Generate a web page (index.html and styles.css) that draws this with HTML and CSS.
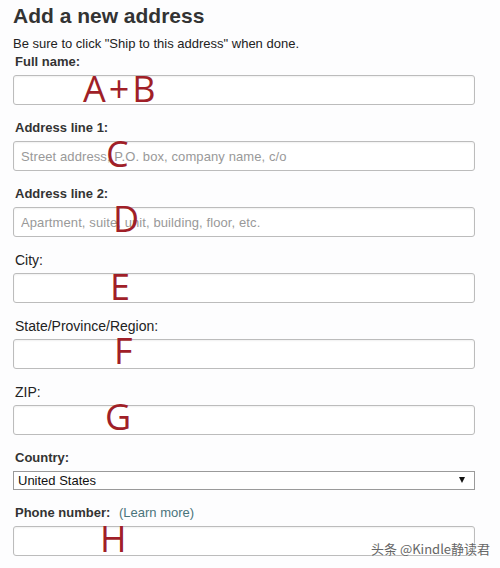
FILE: index.html
```html
<!DOCTYPE html>
<html lang="en">
<head>
    <meta charset="UTF-8">
    <meta name="viewport" content="width=device-width, initial-scale=1.0">
    <title>Add a new address</title>
    <link rel="stylesheet" href="styles.css">
</head>
<body>
    <div class="page">
        <h1 class="title">Add a new address</h1>
        <p class="hint">Be sure to click "Ship to this address" when done.</p>

        <form class="address-form">
            <div class="field first">
                <label for="fullName">Full name:</label>
                <div class="box">
                    <input type="text" id="fullName">
                    <span class="mark mark-ab">A+B</span>
                </div>
            </div>
            <div class="field">
                <label for="line1">Address line 1:</label>
                <div class="box">
                    <input type="text" id="line1" placeholder="Street address, P.O. box, company name, c/o">
                    <span class="mark mark-c">C</span>
                </div>
            </div>
            <div class="field">
                <label for="line2">Address line 2:</label>
                <div class="box">
                    <input type="text" id="line2" placeholder="Apartment, suite, unit, building, floor, etc.">
                    <span class="mark mark-d">D</span>
                </div>
            </div>
            <div class="field">
                <label class="plain" for="city">City:</label>
                <div class="box">
                    <input type="text" id="city">
                    <span class="mark mark-e">E</span>
                </div>
            </div>
            <div class="field">
                <label class="plain" for="state">State/Province/Region:</label>
                <div class="box">
                    <input type="text" id="state">
                    <span class="mark mark-f">F</span>
                </div>
            </div>
            <div class="field">
                <label class="plain" for="zip">ZIP:</label>
                <div class="box">
                    <input type="text" id="zip">
                    <span class="mark mark-g">G</span>
                </div>
            </div>
            <div class="field">
                <label for="country">Country:</label>
                <div class="select-wrap">
                    <select id="country">
                        <option>United States</option>
                        <option>Canada</option>
                        <option>United Kingdom</option>
                    </select>
                </div>
            </div>
            <div class="field">
                <label for="phone">Phone number: <a class="learn-more" href="#">(Learn more)</a></label>
                <div class="box">
                    <input type="text" id="phone">
                    <span class="mark mark-h">H</span>
                </div>
            </div>
        </form>
    </div>

    <div class="watermark">头条 @Kindle静读君</div>
</body>
</html>
```

FILE: styles.css
```css
body {
    margin: 0;
    background-color: #fdfdfe;
    font-family: "Liberation Sans", Arial, sans-serif;
    color: #333;
}

.page {
    width: 462px;
    padding: 0 13px;
}

.title {
    margin: 4px 0 0;
    font-size: 21px;
    line-height: 24px;
    font-weight: bold;
    color: #333;
}

.hint {
    margin: 8px 0 0;
    font-size: 13px;
    line-height: 15px;
    color: #222;
}

.address-form {
    margin-top: 3px;
}

.field {
    margin-bottom: 15px;
}

.field label {
    display: block;
    padding-left: 2px;
    margin-bottom: 5px;
    font-size: 13px;
    line-height: 16px;
    font-weight: bold;
    color: #333;
}

.field label.plain {
    font-size: 14px;
    font-weight: normal;
    color: #222;
}

.learn-more {
    margin-left: 5px;
    font-weight: normal;
    color: #4a747b;
    text-decoration: none;
}

.box {
    position: relative;
}

.box input {
    display: block;
    box-sizing: border-box;
    width: 100%;
    height: 30px;
    padding: 0 7px;
    border: 1px solid #bcbcbc;
    border-radius: 3px;
    background-color: #fff;
    box-shadow: inset 0 1px 2px rgba(0, 0, 0, 0.06);
    font-family: "Liberation Sans", Arial, sans-serif;
    font-size: 13px;
    letter-spacing: 0.1px;
    color: #111;
    outline: none;
}

.box input::placeholder {
    color: #999;
}

.select-wrap {
    position: relative;
}

.select-wrap select {
    display: block;
    box-sizing: border-box;
    width: 100%;
    height: 19px;
    padding: 0 0 0 4px;
    border: 1px solid #9a9a9a;
    border-radius: 0;
    background-color: #fff;
    font-family: "Liberation Sans", Arial, sans-serif;
    font-size: 13px;
    color: #111;
    appearance: none;
    -webkit-appearance: none;
}

.select-wrap::after {
    content: "";
    position: absolute;
    right: 10px;
    top: 6px;
    border-left: 3px solid transparent;
    border-right: 3px solid transparent;
    border-top: 6px solid #111;
    pointer-events: none;
}

/* red hand-written letters laid over the inputs */
.mark {
    position: absolute;
    font-family: "Open Sans", sans-serif;
    font-size: 36px;
    line-height: 30px;
    color: #a01f28;
    pointer-events: none;
}

.mark-ab { left: 70px; top: -1px; letter-spacing: 3px; }
.mark-c { left: 93px; top: -2px; }
.mark-d { left: 100px; top: -3px; }
.mark-e { left: 97px; top: -1px; }
.mark-f { left: 101px; top: -3px; }
.mark-g { left: 92px; top: -3px; }
.mark-h { left: 87px; top: -2px; }

.watermark {
    position: absolute;
    left: 371px;
    top: 540px;
    font-family: "Noto Sans CJK SC", sans-serif;
    font-size: 13px;
    line-height: 18px;
    color: #666;
    text-shadow: 0 0 2px #fff, 0 0 2px #fff;
}
```
